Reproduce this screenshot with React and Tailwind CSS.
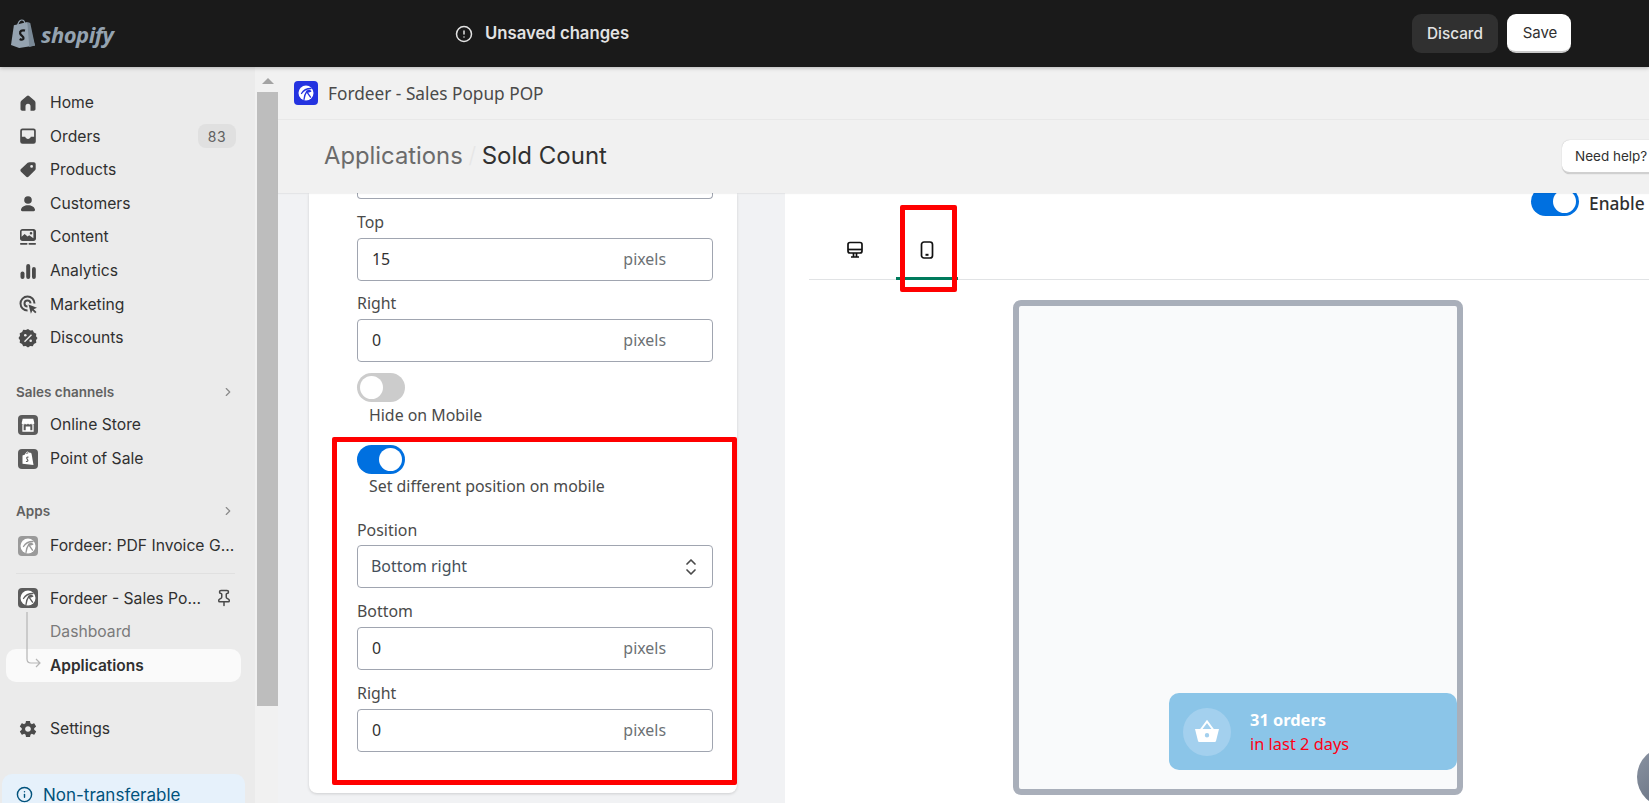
import React from "react";
import { ChevronRight, Info, Pin, CircleAlert } from "lucide-react";
import { IoMdSettings } from "react-icons/io";

const inter = "font-['Inter','Liberation_Sans',sans-serif]";
const noto = "font-['Noto_Sans','Open_Sans',sans-serif]";

const Ic = ({ children }) => (
  <svg viewBox="0 0 20 20" className="w-5 h-5 shrink-0 text-[#4a4a4a]" fill="currentColor" fillRule="evenodd">{children}</svg>
);

const HomeI = () => <Ic><path d="M8.9 2.9a1.7 1.7 0 0 1 2.2 0l5.3 4.6c.7.6 1.1 1.4 1.1 2.3v6.2c0 1-.8 1.7-1.7 1.7h-3.3v-4.4a2.5 2.5 0 0 0-5 0v4.4H4.2c-.9 0-1.7-.7-1.7-1.7V9.800c0-.9.4-1.700 1.100-2.300z" /></Ic>;
const OrdersI = () => <Ic><path d="M4.500 2.500h11a2.300 2.300 0 0 1 2.300 2.300v10.700a2.300 2.300 0 0 1-2.300 2.300h-11a2.300 2.300 0 0 1-2.300-2.300V4.800a2.300 2.300 0 0 1 2.300-2.300zM4.700 4.300c-.5 0-.8.3-.8.8v5.700h3.300c.5 1.300 1.500 2.100 2.800 2.100s2.300-.8 2.800-2.100h3.300V5.100c0-.5-.3-.8-.8-.8z" /></Ic>;
const TagI = () => <Ic><path d="M11.500 2.300h4.300c1 0 1.900.9 1.900 1.900v4.500c0 .6-.2 1.200-.7 1.600l-6.300 6.300c-.8.8-2 .8-2.700 0l-5-4.900c-.8-.8-.8-2 0-2.700l6.700-6.200c.5-.3 1.200-.5 1.800-.5zM13.600 5a1.400 1.400 0 1 0 0 2.800 1.400 1.400 0 0 0 0-2.800z" /></Ic>;
const PersonI = () => <Ic><circle cx="10" cy="6" r="3.800" /><path d="M10 11.200c-3.700 0-6.500 1.700-7 4.400-.2.900.5 1.600 1.300 1.600h11.400c.8 0 1.500-.7 1.300-1.600-.5-2.700-3.300-4.400-7-4.400z" /></Ic>;
const ContentI = () => <Ic><path d="M4.500 2h11C16.900 2 18 3.100 18 4.500v7c0 1.400-1.100 2.500-2.500 2.500h-11C3.100 14 2 12.900 2 11.500v-7C2 3.100 3.100 2 4.500 2zM4.300 3.800c-.5 0-.7.300-.7.700v5.300l3-2.800 3 2.500 1.600-1.300 4.200 3V4.500c0-.4-.2-.7-.7-.7zM13 5a1.300 1.300 0 1 0 0 2.600 1.300 1.300 0 0 0 0-2.600z" /><rect x="2" y="16" width="7.500" height="1.700" rx=".8" /><rect x="10.500" y="16" width="7.500" height="1.700" rx=".8" /></Ic>;
const AnalyticsI = () => <Ic><rect x="2.500" y="10.500" width="4" height="7.500" rx="2" /><rect x="8.200" y="3" width="4" height="15" rx="2" /><rect x="14" y="6" width="3.800" height="12" rx="1.900" /></Ic>;
const MarketI = () => <Ic><path d="M9.500 1.500a8 8 0 0 1 8 8l-2 .1a6 6 0 1 0-6 6l.1 2a8 8 0 0 1-.1-16.100zM9.500 5.500a4 4 0 0 1 4 3.800l-2 .1a2 2 0 1 0-2 2.100v2a4 4 0 0 1 0-8z" /><path d="M10.500 10.500l8.500 3.200-3.300 1.500 2.800 2.800-1.300 1.300-2.800-2.800-1.500 3.300z" /></Ic>;
const DiscountI = () => (
  <Ic>
    <path d="M10 1l2.200 1.500 2.600-.3 1.100 2.400 2.400 1.100-.3 2.600L19.500 10 18 12.200l.3 2.600-2.400 1.100-1.100 2.400-2.600-.3L10 19.500l-2.200-1.500-2.600.3-1.100-2.400-2.400-1.100.3-2.600L.5 10 2 7.800l-.3-2.600 2.400-1.100 1.100-2.400 2.600.3z" />
    <circle cx="7.300" cy="7.300" r="1.300" fill="#ebebeb" />
    <circle cx="12.700" cy="12.700" r="1.300" fill="#ebebeb" />
    <path d="M13 6.200l1 1-7 7-1-1z" fill="#ebebeb" />
  </Ic>
);
const SettingsI = () => <span className="w-5 h-5 shrink-0 flex items-center justify-center text-[#4a4a4a]"><IoMdSettings size={22} /></span>;

const Square = ({ children, cls = "bg-[#5c5c5c]" }) => (
  <span className={`w-5 h-5 shrink-0 rounded-[4px] flex items-center justify-center ${cls}`}>{children}</span>
);
const StoreI = () => (
  <Square>
    <svg viewBox="0 0 20 20" className="w-5 h-5" fill="none">
      <path d="M4.700 3.800h10.600l1 4.200a1.600 1.600 0 0 1-3.200.4 1.700 1.700 0 0 1-3.100 0 1.700 1.700 0 0 1-3.100 0A1.600 1.600 0 0 1 3.700 8z" fill="#fff" />
      <path d="M5 10v6h10v-6" stroke="#fff" strokeWidth="1.300" />
      <rect x="7.700" y="11.500" width="4.600" height="4.500" fill="#fff" />
    </svg>
  </Square>
);
const PosI = () => (
  <Square>
    <svg viewBox="0 0 20 20" className="w-5 h-5">
      <path d="M4.500 6.500l7.500-3 1.500 1 2 11.500-11-1.300z" fill="#fff" />
      <path d="M7.500 6c0-1.500 1-3 2-3s1.700 1 1.700 2.500" fill="none" stroke="#fff" />
      <path d="M10.500 8.300c-1.500-.5-2.300.5-1.500 1.500s1.500 1.300.7 2.400c-.4.400-1 .4-1.700.1" stroke="#5c5c5c" strokeWidth="1.100" fill="none" />
    </svg>
  </Square>
);
const Deer = ({ c }) => (
  <svg viewBox="0 0 20 20" className="w-5 h-5">
    <circle cx="10" cy="10" r="7.500" fill="#fff" />
    <path d="M15 5.500C11 5.500 7.500 7 5.500 10.500M8 16.500c.3-3 1.200-6 3-8.500 1.200-.6 2.700-.6 3.800.2-1.200.6-2.700.9-3.800.9l3.500 5" fill="none" stroke={c} strokeWidth="1.300" strokeLinecap="round" strokeLinejoin="round" />
  </svg>
);

const Item = ({ icon, label, children, className = "" }) => (
  <div className={`h-[33.6px] flex items-center pl-[18px] pr-[19px] ${className}`}>
    {icon}
    <span className="ml-3 text-[15.700px] text-[#303030] whitespace-nowrap flex-1">{label}</span>
    {children}
  </div>
);

const SectionHead = ({ label, className }) => (
  <div className={`h-6 flex items-center pl-4 pr-[20px] justify-between ${className}`}>
    <span className="text-[13.500px] font-semibold text-[#616161]">{label}</span>
    <ChevronRight size={14} className="text-[#8a8a8a]" />
  </div>
);

const Sidebar = () => (
  <aside className={`w-[255px] shrink-0 bg-[#ebebeb] pt-[19px] overflow-hidden ${inter}`}>
    <Item icon={<HomeI />} label="Home" />
    <Item icon={<OrdersI />} label="Orders">
      <span className="w-[38px] h-6 rounded-lg bg-[#e0e0e0] text-[#616161] text-[14px] tracking-[0.5px] flex items-center justify-center">83</span>
    </Item>
    <Item icon={<TagI />} label="Products" />
    <Item icon={<PersonI />} label="Customers" />
    <Item icon={<ContentI />} label="Content" />
    <Item icon={<AnalyticsI />} label="Analytics" />
    <Item icon={<MarketI />} label="Marketing" />
    <Item icon={<DiscountI />} label="Discounts" />
    <SectionHead label="Sales channels" className="mt-[25.500px]" />
    <Item icon={<StoreI />} label="Online Store" className="mt-[4px]" />
    <Item icon={<PosI />} label="Point of Sale" />
    <SectionHead label="Apps" className="mt-[24px]" />
    <Item icon={<Square cls="bg-[#9a9a9a]"><Deer c="#9a9a9a" /></Square>} label="Fordeer: PDF Invoice G..." className="mt-[5.500px]" />
    <div className="h-px bg-[#e0e0e0] ml-4 mr-5 mt-[10px]" />
    <Item icon={<Square><Deer c="#5c5c5c" /></Square>} label="Fordeer - Sales Po..." className="mt-[8px]">
      <Pin size={18} className="text-[#4a4a4a] mr-[3px]" />
    </Item>
    <div className="relative">
      <svg className="absolute left-[25px] -top-[3px] w-[16px] h-[60px]" viewBox="0 0 16 60" fill="none" stroke="#b5b5b5" strokeWidth="1.200">
        <path d="M2 0v47c0 3 1 4 4 4h9M11 47l4 4-4 4" />
      </svg>
      <div className="h-[33.6px] flex items-center pl-[50px] text-[15.700px] text-[#7a7a7a]">Dashboard</div>
      <div className="h-[33.6px] flex items-center pl-[44px] ml-[6px] mr-[14px] rounded-[10px] bg-[#fafafa] text-[15.500px] font-semibold text-[#303030]">Applications</div>
    </div>
    <div className="h-[29.500px]" />
    <Item icon={<SettingsI />} label="Settings" />
    <div className="mt-[29px] ml-[2px] mr-[10px] h-20 rounded-[10px] bg-[#e6f1fb] pl-[14px] pt-[9px] flex items-start">
      <Info size={17} className="text-[#00527c] mt-[3px]" />
      <span className="ml-[10px] text-[17px] text-[#00527c]">Non-transferable</span>
    </div>
  </aside>
);

const Scrollbar = () => (
  <div className="w-[23px] shrink-0 pl-[2px] bg-[#f1f1f1]">
    <div className="h-[25px] flex items-end justify-center pb-[8px]">
      <div className="w-0 h-0 border-x-[6px] border-x-transparent border-b-[6px] border-b-[#a3a3a3]" />
    </div>
    <div className="h-[614px] bg-[#bdbdbd]" />
  </div>
);

const Field = ({ label, value, className = "" }) => (
  <div className={className}>
    <div className="pt-[11px] h-[39px] text-[15.900px] leading-6 text-[#4a4a4a]">{label}</div>
    <div className="h-[43px] rounded-[4px] border border-[#a0a5b0] pl-[14px] pr-[46px] flex items-center justify-between text-[15.900px]">
      <span className="text-[#303030]">{value}</span>
      <span className="text-[#6d7175]">pixels</span>
    </div>
  </div>
);

const Toggle = ({ on }) => (
  <div className={`w-12 h-[29px] rounded-full p-[3px] flex ${on ? "bg-[#0070e0] justify-end" : "bg-[#cccccc] justify-start"}`}>
    <div className="w-[23px] h-[23px] rounded-full bg-white" />
  </div>
);

const FormCard = () => (
  <div className={`relative w-[428px] shrink-0 h-[600px] bg-white rounded-b-lg shadow-[0_1px_3px_rgba(0,0,0,0.15)] pl-12 pr-6 ${noto}`}>
    <div className="h-[6px] rounded-b-[4px] border border-t-0 border-[#a0a5b0]" />
    <Field label="Top" value="15" className="-mb-px" />
    <Field label="Right" value="0" />
    <div className="mt-[11px]"><Toggle /></div>
    <div className="ml-3 mt-[1px] h-6 text-[15.900px] leading-6 text-[#4a4a4a]">Hide on Mobile</div>
    <div className="mt-[18px]"><Toggle on /></div>
    <div className="ml-3 h-6 text-[15.900px] leading-6 text-[#4a4a4a]">Set different position on mobile</div>
    <div className="mt-[19px] h-[28px] pt-[1px] text-[15.900px] leading-6 text-[#4a4a4a]">Position</div>
    <div className="h-[43px] rounded-[4px] border border-[#a0a5b0] pl-[13px] pr-[15px] flex items-center justify-between text-[15.900px] text-[#454f5b]">
      <span>Bottom right</span>
      <svg viewBox="0 0 12 18" className="w-3 h-[18px]" fill="none" stroke="#4a4a4a" strokeWidth="1.700" strokeLinecap="round" strokeLinejoin="round">
        <path d="M2 6l4-4 4 4M2 12l4 4 4-4" />
      </svg>
    </div>
    <Field label="Bottom" value="0" />
    <Field label="Right" value="0" />
    <div className="absolute left-[23px] top-[244px] w-[405px] h-[348px] border-[5px] border-[#ff0000] rounded-[2px]" />
  </div>
);

const Preview = () => (
  <div className={`relative flex-1 h-[640px] bg-white overflow-hidden ${noto}`}>
    <div className="h-[23px] flex justify-start pl-[746px] items-start">
      <div className="-mt-[6px] shrink-0"><Toggle on /></div>
      <span className="ml-[10px] -mt-[1px] text-[17.300px] font-medium text-[#303030] leading-6">Enable</span>
    </div>
    <div className="ml-6 h-[64px] border-b border-[#e1e3e5] flex pl-[16px] gap-[11px]">
      <div className="w-[60px] h-[64px] flex items-center justify-center pt-[3px]">
        <svg viewBox="0 0 20 20" className="w-5 h-5" fill="none" stroke="#111" strokeWidth="1.700">
          <rect x="3" y="2.500" width="14" height="10.500" rx="2" />
          <path d="M3 9.500h14" />
          <path d="M8.500 13v3.500M11.500 13v3.500M6 17h8" />
        </svg>
      </div>
      <div className="w-[62px] h-[64px] border-b-[3px] border-[#007a5c] flex items-center justify-center pt-[6px]">
        <svg viewBox="0 0 20 20" className="w-5 h-5" fill="none" stroke="#111" strokeWidth="1.700">
          <rect x="4.500" y="2" width="11" height="16" rx="2.500" />
          <path d="M8.500 14.800h3" strokeWidth="2" />
        </svg>
      </div>
    </div>
    <div className="relative ml-[228px] mt-[20px] w-[450px] h-[495px] rounded-[8px] border-[6px] border-[#a9afba] bg-[#f9fafb]">
      <div className="absolute left-[150px] bottom-[19px] w-[288px] h-[77px] rounded-[10px] bg-[#8bc5e8] flex items-center pl-[14px]">
        <div className="w-12 h-12 rounded-full bg-[#a3d0ee] flex items-center justify-center">
          <svg viewBox="0 0 28 28" className="w-7 h-7">
            <path d="M2 11h24l-3 12c-.2.8-.9 1-1.500 1H6.500c-.6 0-1.300-.2-1.500-1zM14 15a2.200 2.200 0 1 0 0 4.400 2.200 2.200 0 0 0 0-4.400z" fill="#fff" fillRule="evenodd" />
            <path d="M8 11.500l6-8 6 8" stroke="#fff" strokeWidth="2" fill="none" />
          </svg>
        </div>
        <div className="ml-[19px] pt-[1px]">
          <div className="text-[16.400px] font-bold leading-6 text-white">31 orders</div>
          <div className="text-[16.400px] leading-6 text-[#ff0015]">in last 2 days</div>
        </div>
      </div>
    </div>
    <div className="absolute left-[115px] top-[12px] w-[57px] h-[87px] border-[5px] border-[#ff0000] rounded-[2px]" />
    <div className="absolute left-[852px] top-[554px] w-[60px] h-[60px] rounded-full bg-[linear-gradient(135deg,#8b94a3,#5b6676)]" />
  </div>
);

export default function App() {
  return (
    <div className="w-[1649px] h-[803px] overflow-hidden flex flex-col bg-[#f1f2f4]">
      <header className="h-[67px] shrink-0 bg-[#1a1a1a] flex items-center relative z-10 shadow-[0_1px_4px_rgba(0,0,0,0.25)]">
        <div className="w-[465px] pl-[11px] flex items-center shrink-0">
          <svg viewBox="0 0 26 30" className="w-[25px] h-[29px]">
            <path d="M3 6.500l14-3.500 8 24.500-16.500 2.500L0 27z" fill="#95a3b0" />
            <path d="M17 3l3 1.200L25 27.500l-6 1.500z" fill="#7a8996" />
            <path d="M7 7c0-3 2-6 4-6s3.500 2 3.500 5" fill="none" stroke="#95a3b0" strokeWidth="1.200" />
            <path d="M14.500 12c-3-1-5.500.5-5 3s4.500 3 3.500 5.500c-.7 1.200-2.500 1-4 .2" fill="none" stroke="#1a1a1a" strokeWidth="2.300" />
          </svg>
          <span className="ml-[5px] text-[22px] italic font-bold leading-none text-[#95a3b0] font-['Open_Sans',sans-serif] tracking-[-0.5px]">shopify</span>
        </div>
        <div className={`flex items-center pt-[1px] ${inter}`}>
          <CircleAlert size={18} className="text-[#e3e3e3] -ml-[10px]" />
          <span className="ml-[12px] text-[16.700px] font-semibold text-[#e3e3e3]">Unsaved changes</span>
        </div>
        <div className={`ml-auto mr-[78px] flex items-center gap-[9px] ${inter}`}>
          <button className="w-[86px] h-[39px] pt-[2px] rounded-[9px] bg-[#303030] text-[15.300px] font-medium text-[#e3e3e3]">Discard</button>
          <button className="w-[64px] h-[39px] pt-[2px] pl-[2px] rounded-[9px] bg-white text-[15px] text-[#303030] border-b-2 border-[#c9c9c9]">Save</button>
        </div>
      </header>
      <div className="flex flex-1 min-h-0">
        <Sidebar />
        <Scrollbar />
        <main className="flex-1 min-w-0 flex flex-col">
          <div className="h-[53px] shrink-0 bg-[#f1f1f1] border-b border-[#e8e8e8] flex items-center pl-4">
            <span className="w-6 h-6 rounded-[4px] bg-[#2433e0] flex items-center justify-center"><Deer c="#2433e0" /></span>
            <span className={`ml-[10px] pt-[2px] text-[17.250px] text-[#4a4a4a] ${noto}`}>Fordeer - Sales Popup POP</span>
          </div>
          <div className={`h-[73px] shrink-0 bg-[#f1f1f1] flex items-center pl-[46px] pb-[2px] ${inter} relative shadow-[0_1px_1px_rgba(0,0,0,0.05)] z-[1]`}>
            <span className="text-[23.800px] text-[#6b6b6b]">Applications</span>
            <span className="text-[22px] text-[#e6e6e6] w-[19px] text-center font-light">/</span>
            <span className="text-[24px] text-[#303030]">Sold Count</span>
            <button className="absolute left-[1284px] top-[20px] w-[120px] h-[34px] rounded-[8px] bg-white border-b-2 border-[#d0d0d0] shadow-[0_0_1px_rgba(0,0,0,0.3)] text-left pl-[13px] text-[13.500px] text-[#303030] whitespace-nowrap">Need help?</button>
          </div>
          <div className="flex-1 min-h-0 flex pl-[31px] gap-12">
            <FormCard />
            <Preview />
          </div>
        </main>
      </div>
    </div>
  );
}
